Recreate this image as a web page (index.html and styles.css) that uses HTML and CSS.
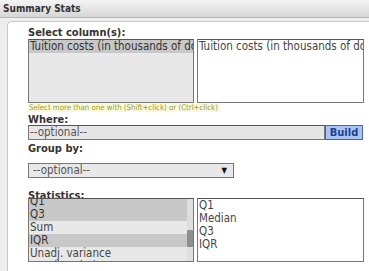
FILE: index.html
```html
<!DOCTYPE html>
<html lang="en">
<head>
    <meta charset="UTF-8">
    <title>Summary Stats</title>
    <link rel="stylesheet" href="styles.css">
</head>
<body>
    <div class="header">Summary Stats</div>

    <div class="page">
        <div class="panel">
            <div class="label">Select column(s):</div>
            <div class="pair">
                <div class="listbox grey">
                    <div class="opt sel">Tuition costs (in thousands of dollars)</div>
                </div>
                <div class="listbox">
                    <div class="opt">Tuition costs (in thousands of dollars)</div>
                </div>
            </div>
            <div class="hint">Select more than one with (Shift+click) or (Ctrl+click)</div>

            <div class="label where-label">Where:</div>
            <div class="where">
                <div class="field">--optional--</div>
                <div class="build">Build</div>
            </div>

            <div class="label group-label">Group by:</div>
            <div class="dropdown">
                <span>--optional--</span>
                <span class="arrow">&#9660;</span>
            </div>

            <div class="label stats-label">Statistics:</div>
            <div class="pair">
                <div class="listbox grey scroller">
                    <div class="opts scrolled">
                        <div class="opt sel">Q1</div>
                        <div class="opt sel">Q3</div>
                        <div class="opt">Sum</div>
                        <div class="opt sel">IQR</div>
                        <div class="opt">Unadj. variance</div>
                        <div class="opt">Unadj. std. dev.</div>
                    </div>
                    <div class="track"><div class="thumb"></div></div>
                </div>
                <div class="listbox">
                    <div class="opt">Q1</div>
                    <div class="opt">Median</div>
                    <div class="opt">Q3</div>
                    <div class="opt">IQR</div>
                </div>
            </div>
        </div>
    </div>
</body>
</html>
```

FILE: styles.css
```css
html, body { margin: 0; height: 100%; overflow: hidden; }
body { font-family: "DejaVu Sans Condensed", "DejaVu Sans", sans-serif; font-size: 11.5px; color: #444; background: #eeeeee; }

.header { height: 18px; line-height: 17px; padding-left: 3px; font-size: 10px; font-weight: bold; color: #333;
    background: linear-gradient(#f4f4f4, #d6d6d6); border-bottom: 1px solid #b8b8b8; box-sizing: border-box; }

.page { padding: 3px 0 0 7px; height: calc(100% - 18px); box-sizing: border-box; }
.panel { background: #fff; border: 1px solid #c8c8c8; border-right: none; border-bottom: none;
    border-radius: 5px 0 0 0; height: 100%; box-sizing: border-box; padding: 4px 0 0 20px; }

.label { font-weight: bold; font-size: 11px; color: #333; line-height: 13px; height: 13px; }
.where-label { margin-top: 1px; height: 12px; }
.group-label { margin-top: 2px; }
.stats-label { margin-top: 11px; height: 9px; }

.pair { display: flex; gap: 3px; }
.listbox { width: 167px; height: 64px; box-sizing: border-box; border: 1px solid #777; border-top-color: #555;
    background: #fff; overflow: hidden; white-space: nowrap; }
.listbox.grey { width: 166px; background: #e8e8e8; }
.opt { line-height: 13px; height: 13px; padding-left: 1px; color: #444; }
.opt.sel { background: #c8c8c8; color: #333; }

.scroller { display: flex; }
.opts { flex: 1; overflow: hidden; }
.scrolled { margin-top: -4px; }
.track { width: 6px; background: #dedede; padding-top: 31px; box-sizing: border-box; }
.thumb { height: 17px; background: #8e8e8e; border-radius: 1px; }

.hint { width: fit-content; font-size: 7.8px; line-height: 9px; color: #9a9c2c; background: #f9f9dc; padding: 0 2px 0 1px; }

.where { display: flex; width: 335px; height: 15px; }
.field { flex: 1; background: #e6e6e6; border: 1px solid #777; border-top-color: #555; box-sizing: border-box;
    line-height: 13px; padding-left: 1px; color: #555; }
.build { width: 38px; background: #a9c3f2; border: 1px solid #3a63c8; box-sizing: border-box; color: #1c3f94;
    font-weight: bold; font-size: 11px; line-height: 13px; text-align: center; }

.dropdown { display: flex; justify-content: space-between; width: 206px; height: 15px; margin-top: 8px;
    box-sizing: border-box; border: 1px solid #777; background: #e8e8e8; line-height: 13px; padding: 0 6px 0 4px; color: #555; }
.arrow { font-size: 8px; color: #111; }
```
